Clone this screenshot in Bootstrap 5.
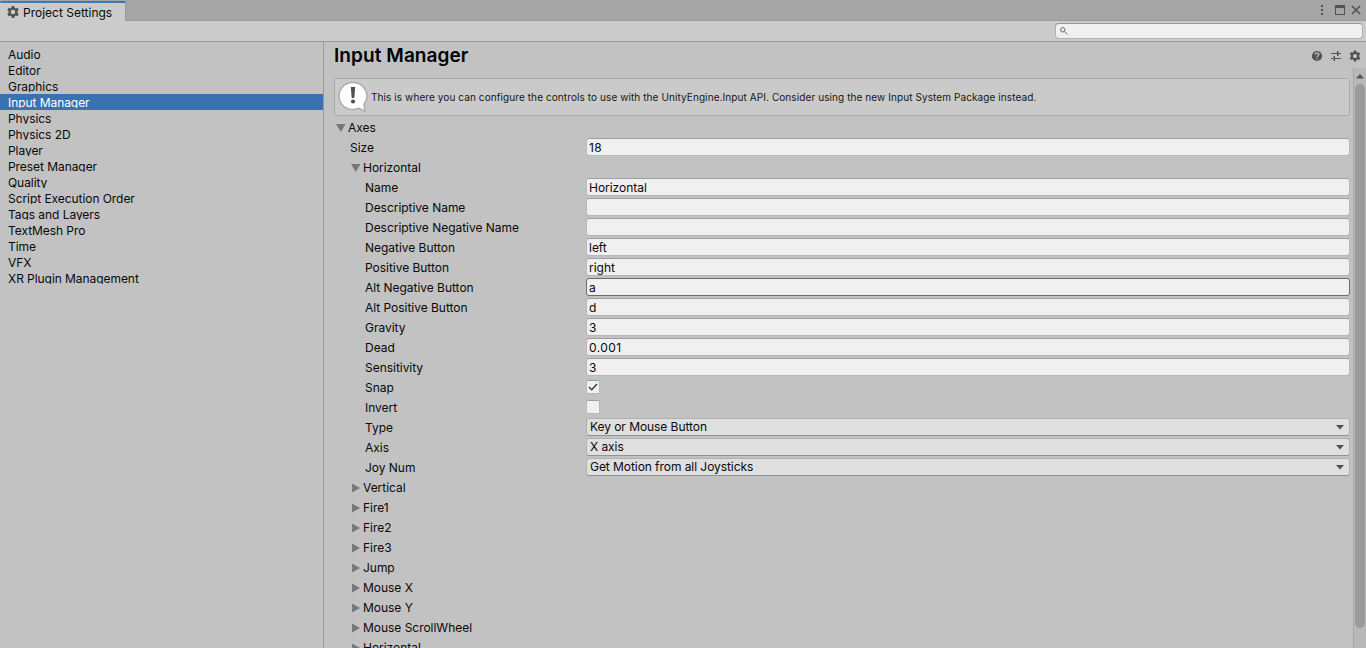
<!DOCTYPE html>
<html lang="en">
<head>
<meta charset="utf-8">
<meta name="viewport" content="width=device-width, initial-scale=1">
<title>Project Settings</title>
<link href="https://cdn.jsdelivr.net/npm/bootstrap@5.3.0/dist/css/bootstrap.min.css" rel="stylesheet">
<style>
html,body{height:100%}
body{font-family:Inter,"Liberation Sans",sans-serif;font-size:12px;line-height:16px;color:#090909;background:#c2c2c2;overflow:hidden;letter-spacing:-.03px}
svg{display:block;flex:none}
.tabstrip{height:21px;background:#a5a5a5;border-bottom:1px solid #999}
.wintab{width:126px;height:20px;margin-top:1px;background:#cbcbcb;border-top:2px solid #3a79bb;border-right:1px solid #999;border-radius:2px 0 0 0;padding:1px 0 0 7px;gap:4px;box-shadow:0 1px #cbcbcb;letter-spacing:0}
.wintab svg{margin-bottom:1px}
.winbtns{padding-right:4px}
.toolstrip{height:21px;background:#cbcbcb;border-bottom:1px solid #999;padding-right:3px}
.searchbox{width:308px;height:16px;background:#f0f0f0;border:1px solid #b0b0b0;border-top-color:#999;border-radius:4px;padding-left:4px}
.side{width:324px;border-right:1px solid #999;padding-top:4px}
.side a{height:16px;line-height:18px;padding-left:8px;overflow:hidden;color:#090909;text-decoration:none;flex:none;border-bottom:2px solid transparent;letter-spacing:-.06px}
.side a.active{background:#3a72b0;color:#fff;}
.panel-head{height:26px;padding:0 6px 0 10px}
.panel-head h1{font-size:19px;line-height:28px;font-weight:600;letter-spacing:.07px;margin:0;color:#000}
.props{padding:10px 3px 0 10px}
.helpbox{height:38px;background:#cacaca;border:1px solid #a9a9a9;border-radius:3px;font-size:10px;letter-spacing:.09px;color:#161616;padding-left:2px;gap:3px;margin-bottom:2px;flex:none}
.prow{height:20px;flex:none}
.plabel{width:252px;line-height:20px;flex:none}
.in1{padding-left:16px}.in2{padding-left:31px}
.fold{gap:2px;line-height:20px}
.fold svg{margin-bottom:1px}
.fold.f0{padding-left:2px}.fold.f1{padding-left:17px}
.field,.drop,.tick{margin-bottom:2px}
.field{height:18px;line-height:17px;background:#f0f0f0;border:1px solid #b7b7b7;border-top-color:#a0a0a0;border-radius:3px;padding-left:2px}
.field.num{letter-spacing:.45px}
.field.hot{border-color:#6c6c6c;}
.drop{height:18px;line-height:15px;background:#dfdfdf;border:1px solid #b2b2b2;border-bottom-color:#939393;border-radius:3px;padding:0 5px 0 3px;letter-spacing:-.06px}
.drop span{padding-bottom:2px}
.tick{width:14px;height:14px;background:#f0f0f0;border:1px solid #b7b7b7;border-top-color:#a0a0a0;border-radius:2px}
.scroller{width:13px;background:#b8b8b8;border-left:1px solid #a8a8a8;padding:6px 1px 0 1px}
.thumb{width:10px;height:544px;border-radius:5px;background:#9a9a9a;margin-top:2px}
</style>
</head>
<body class="d-flex flex-column">
<header class="tabstrip d-flex justify-content-between flex-shrink-0">
  <div class="wintab d-flex align-items-center">
    <svg width="12" height="12" viewBox="0 0 12 12"><use href="#gear"/></svg><span>Project Settings</span>
  </div>
  <div class="winbtns d-flex align-items-center">
    <svg width="46" height="20" viewBox="0 0 46 20" fill="#515151">
      <path d="M5 5h2v2H5zM5 9h2v2H5zM5 13h2v2H5z"/>
      <path fill-rule="evenodd" d="M19 5h10v10H19zM20 8v6h8V8z"/>
      <path d="M36 6l8 8M44 6l-8 8" stroke="#515151" stroke-width="1.500" fill="none"/>
    </svg>
  </div>
</header>
<div class="toolstrip d-flex justify-content-end align-items-center flex-shrink-0">
  <div class="searchbox d-flex align-items-center">
    <svg width="8" height="8" viewBox="0 0 8 8" fill="none" stroke="#666"><circle cx="2.800" cy="2.800" r="2.200"/><path d="M4.500 4.500l3 3"/></svg>
  </div>
</div>
<div class="d-flex flex-grow-1 overflow-hidden">
  <nav class="side d-flex flex-column flex-shrink-0">
    <a>Audio</a><a>Editor</a><a>Graphics</a><a class="active">Input Manager</a><a>Physics</a><a>Physics 2D</a><a>Player</a><a>Preset Manager</a><a>Quality</a><a>Script Execution Order</a><a>Tags and Layers</a><a>TextMesh Pro</a><a>Time</a><a>VFX</a><a>XR Plugin Management</a>
  </nav>
  <main class="d-flex flex-column flex-grow-1 overflow-hidden">
    <div class="panel-head d-flex justify-content-between flex-shrink-0">
      <h1>Input Manager</h1>
      <svg width="50" height="28" viewBox="0 0 50 28" fill="#515151">
        <circle cx="7" cy="14" r="5.100"/>
        <path d="M5.200 12.700c0-2.600 3.800-2.400 3.700-.2C8.800 13.700 7 13.700 7 15.200M7 16.200v1.300" stroke="#c8c8c8" stroke-width="1.200" fill="none"/>
        <path d="M21 11h6v1h-6zM27 9h1.500v5H27zM28.500 11H31v1h-2.500zM21 16h2v1h-2zM23.500 14H25v5h-1.500zM25 16h6v1h-6z"/>
        <g transform="translate(39.500 8.500) scale(.92)"><use href="#gear"/></g>
      </svg>
    </div>
    <div class="d-flex flex-grow-1 overflow-hidden">
      <div class="props d-flex flex-column flex-grow-1 overflow-hidden">
        <div class="helpbox d-flex align-items-center">
          <svg width="31" height="32" viewBox="0 0 31 32">
            <path d="M16 1.500a13.500 13.500 0 1 0 5.500 25.600L28 30.200l-1-7A13.500 13.500 0 0 0 16 1.500z" fill="#fff" stroke="#adadad" stroke-width="1.500"/>
            <path d="M13.800 6h4.400l-.9 11h-2.600z" fill="#515151"/><circle cx="16" cy="20.500" r="2.100" fill="#515151"/>
          </svg>
          <span>This is where you can configure the controls to use with the UnityEngine.Input API. Consider using the new Input System Package instead.</span>
        </div>
        <div class="prow fold f0 d-flex align-items-center"><svg width="10" height="8" fill="#777"><path d="M0 0h9.500L4.750 8z"/></svg><span>Axes</span></div>
        <div class="prow d-flex align-items-center"><div class="plabel in1">Size</div><div class="field num flex-grow-1">18</div></div>
        <div class="prow fold f1 d-flex align-items-center"><svg width="10" height="8" fill="#777"><path d="M0 0h9.500L4.750 8z"/></svg><span>Horizontal</span></div>
        <div class="prow d-flex align-items-center"><div class="plabel in2">Name</div><div class="field flex-grow-1">Horizontal</div></div>
        <div class="prow d-flex align-items-center"><div class="plabel in2">Descriptive Name</div><div class="field flex-grow-1"></div></div>
        <div class="prow d-flex align-items-center"><div class="plabel in2">Descriptive Negative Name</div><div class="field flex-grow-1"></div></div>
        <div class="prow d-flex align-items-center"><div class="plabel in2">Negative Button</div><div class="field flex-grow-1">left</div></div>
        <div class="prow d-flex align-items-center"><div class="plabel in2">Positive Button</div><div class="field flex-grow-1">right</div></div>
        <div class="prow d-flex align-items-center"><div class="plabel in2">Alt Negative Button</div><div class="field hot flex-grow-1">a</div></div>
        <div class="prow d-flex align-items-center"><div class="plabel in2">Alt Positive Button</div><div class="field flex-grow-1">d</div></div>
        <div class="prow d-flex align-items-center"><div class="plabel in2">Gravity</div><div class="field num flex-grow-1">3</div></div>
        <div class="prow d-flex align-items-center"><div class="plabel in2">Dead</div><div class="field num flex-grow-1">0.001</div></div>
        <div class="prow d-flex align-items-center"><div class="plabel in2">Sensitivity</div><div class="field num flex-grow-1">3</div></div>
        <div class="prow d-flex align-items-center"><div class="plabel in2">Snap</div><div class="tick"><svg width="12" height="12" viewBox="0 0 12 12" fill="none" stroke="#3c3c3c" stroke-width="1.500"><path d="M2 6l2.700 2.700L10 3"/></svg></div></div>
        <div class="prow d-flex align-items-center"><div class="plabel in2">Invert</div><div class="tick"></div></div>
        <div class="prow d-flex align-items-center"><div class="plabel in2">Type</div><div class="drop flex-grow-1 d-flex justify-content-between align-items-center"><span>Key or Mouse Button</span><svg width="8" height="5" fill="#515151"><path d="M0 0h8L4 4.500z"/></svg></div></div>
        <div class="prow d-flex align-items-center"><div class="plabel in2">Axis</div><div class="drop flex-grow-1 d-flex justify-content-between align-items-center"><span>X axis</span><svg width="8" height="5" fill="#515151"><path d="M0 0h8L4 4.500z"/></svg></div></div>
        <div class="prow d-flex align-items-center"><div class="plabel in2">Joy Num</div><div class="drop flex-grow-1 d-flex justify-content-between align-items-center"><span>Get Motion from all Joysticks</span><svg width="8" height="5" fill="#515151"><path d="M0 0h8L4 4.500z"/></svg></div></div>
        <div class="prow fold f1 d-flex align-items-center"><svg width="10" height="10"><use href="#closed"/></svg><span>Vertical</span></div>
        <div class="prow fold f1 d-flex align-items-center"><svg width="10" height="10"><use href="#closed"/></svg><span>Fire1</span></div>
        <div class="prow fold f1 d-flex align-items-center"><svg width="10" height="10"><use href="#closed"/></svg><span>Fire2</span></div>
        <div class="prow fold f1 d-flex align-items-center"><svg width="10" height="10"><use href="#closed"/></svg><span>Fire3</span></div>
        <div class="prow fold f1 d-flex align-items-center"><svg width="10" height="10"><use href="#closed"/></svg><span>Jump</span></div>
        <div class="prow fold f1 d-flex align-items-center"><svg width="10" height="10"><use href="#closed"/></svg><span>Mouse X</span></div>
        <div class="prow fold f1 d-flex align-items-center"><svg width="10" height="10"><use href="#closed"/></svg><span>Mouse Y</span></div>
        <div class="prow fold f1 d-flex align-items-center"><svg width="10" height="10"><use href="#closed"/></svg><span>Mouse ScrollWheel</span></div>
        <div class="prow fold f1 d-flex align-items-center"><svg width="10" height="10"><use href="#closed"/></svg><span>Horizontal</span></div>
      </div>
      <div class="scroller flex-shrink-0">
        <svg width="10" height="8" fill="#515151"><path d="M1 4.500h8L5 0z"/></svg>
        <div class="thumb"></div>
      </div>
    </div>
  </main>
</div>
<svg width="0" height="0" class="d-none"><defs>
  <path id="closed" d="M1 .5v9L9 5z" fill="#777"/>
  <path id="gear" fill="#515151" fill-rule="evenodd" d="M4.800 0h2.400l.4 1.700 1.200.7L10.500 1.800l1.200 2.100-1.200 1.200v1.800l1.200 1.200-1.200 2.100-1.700-.6-1.200.7L7.200 12H4.800l-.4-1.700-1.200-.7-1.700.6L.3 8.100l1.200-1.200V5.100L.3 3.900l1.200-2.100 1.700.6 1.200-.7zM6 3.700a2.300 2.300 0 1 0 0 4.600 2.300 2.300 0 0 0 0-4.600z"/>
</defs></svg>
<script src="https://cdn.jsdelivr.net/npm/bootstrap@5.3.0/dist/js/bootstrap.bundle.min.js"></script>
</body>
</html>
